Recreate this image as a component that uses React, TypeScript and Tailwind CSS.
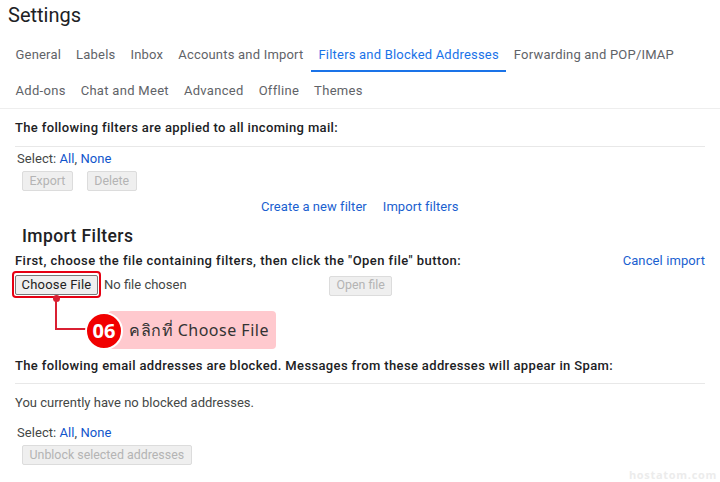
const row1 = ['General', 'Labels', 'Inbox', 'Accounts and Import', 'Filters and Blocked Addresses', 'Forwarding and POP/IMAP'];
const row2 = ['Add-ons', 'Chat and Meet', 'Advanced', 'Offline', 'Themes'];

function Tab({ label }: { label: string }) {
    const active = label === 'Filters and Blocked Addresses';
    return (
        <div className={`h-9 pt-[3px] px-[7.5px] flex items-center border-b-2 ${active ? 'border-[#1a73e8] text-[#1a73e8]' : 'border-transparent text-[#5f6368]'}`}>
            {label}
        </div>
    );
}

function GrayButton({ label }: { label: string }) {
    return (
        <div className="h-5 px-[6.5px] flex items-center rounded-[2px] border border-[#dcdcdc] bg-[#efefef] text-[#b4b4b4] text-[12.4px] tracking-normal">
            {label}
        </div>
    );
}

function SelectLine() {
    return (
        <div className="h-[18px] pl-[2px] flex items-center text-[#444746] tracking-[0.06px]">
            Select:&nbsp;<span className="text-[#1155cc]">All</span>,&nbsp;<span className="text-[#1155cc]">None</span>
        </div>
    );
}

export default function App() {
    return (
        <div className="relative w-[720px] h-[482px] overflow-hidden bg-white text-[13px] font-['Roboto',sans-serif] tracking-[0.2px]">
            <div className="h-9 pl-2 text-[20px] text-[#202124] leading-[30px] tracking-normal">Settings</div>

            <div className="pl-2 flex tracking-[0.2px]">
                {row1.map((t) => <Tab key={t} label={t} />)}
            </div>
            <div className="pl-2 flex tracking-[0.3px] border-b border-[#eeeeee]">
                {row2.map((t) => <Tab key={t} label={t} />)}
            </div>

            <div className="px-[15px]">
                <div className="h-[38px] flex items-center font-medium text-[#202124] tracking-[0.35px] border-b border-[#e8e8e8]">
                    The following filters are applied to all incoming mail:
                </div>
                <div className="mt-[3px]"><SelectLine /></div>
                <div className="mt-[3px] pl-[7px] flex gap-[14px]">
                    <GrayButton label="Export" />
                    <GrayButton label="Delete" />
                </div>
                <div className="mt-[6px] h-5 pl-[246px] flex items-center gap-4 text-[#1a5fd0] tracking-[0.05px]">
                    <span>Create a new filter</span>
                    <span>Import filters</span>
                </div>

                <div className="mt-[9px] h-[20px] pl-[7px] flex items-center text-[17.5px] tracking-[0.4px] font-medium text-[#202124]">Import Filters</div>
                <div className="mt-[5px] h-5 flex items-center justify-between">
                    <span className="font-medium text-[#202124] tracking-[0.46px]">First, choose the file containing filters, then click the "Open file" button:</span>
                    <span className="text-[#1a5fd0] tracking-[0.1px]">Cancel import</span>
                </div>
                <div className="mt-1 flex items-center h-5">
                    <div className="w-[83px] h-5 flex items-center justify-center rounded-[2px] border border-[#777777] bg-[#efefef] text-[#222222]">Choose File</div>
                    <span className="ml-[6px] w-[225px] text-[#444746] tracking-normal">No file chosen</span>
                    <div className="mt-[1px]"><GrayButton label="Open file" /></div>
                </div>

                <div className="mt-[61px] h-5 flex items-center font-medium text-[#202124] tracking-[0.36px]">
                    The following email addresses are blocked. Messages from these addresses will appear in Spam:
                </div>
                <div className="mt-[7px] border-t border-[#e8e8e8]" />
                <div className="mt-[10px] h-[18px] flex items-center text-[#444746] tracking-normal">You currently have no blocked addresses.</div>
                <div className="mt-3"><SelectLine /></div>
                <div className="mt-[3px] pl-[7px] flex">
                    <GrayButton label="Unblock selected addresses" />
                </div>
            </div>

            {/* annotation over the page */}
            <div className="absolute left-[12px] top-[271px] w-[89px] h-[27px] rounded-[4px] border-2 border-[#e60012]" />
            <div className="absolute left-[53px] top-[295px] w-[7px] h-[7px] rounded-full bg-[#d92032]" />
            <div className="absolute left-[55px] top-[298px] w-[35px] h-[32px] border-l-2 border-b-2 border-[#d92032]" />
            <div className="absolute left-[108px] top-[311px] w-[168px] h-[38px] rounded-[4px] bg-[#ffc9ce] pl-[21px] flex items-center whitespace-nowrap text-[16px] tracking-[0.5px] text-[#333333] font-['Noto_Sans','DejaVu_Sans',sans-serif]">
                คลิกที่ Choose File
            </div>
            <div className="absolute left-[85px] top-[312px] w-[38px] h-[38px] rounded-full bg-[#f10000] border-2 border-white flex items-center justify-center text-white text-[20px] font-bold tracking-normal font-['Open_Sans',sans-serif]">
                06
            </div>

            <div className="absolute right-[3px] top-[469px] text-[11px] leading-none tracking-[0.7px] font-bold text-[#ececec] font-['Open_Sans',sans-serif]">hostatom.com</div>
        </div>
    );
}
